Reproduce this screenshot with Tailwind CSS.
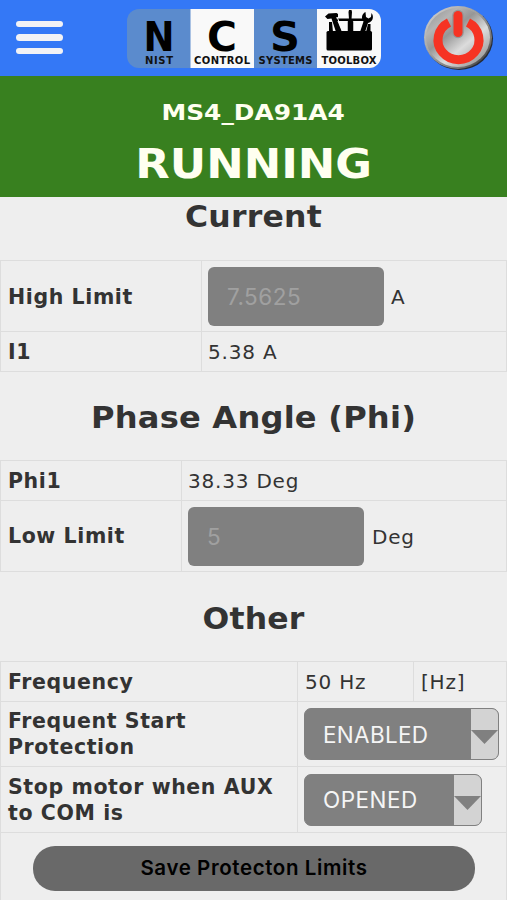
<!DOCTYPE html>
<html lang="en">
<head>
  <meta charset="UTF-8" />
  <meta name="viewport" content="width=device-width, initial-scale=1.0" />
  <title>NIST Control Systems Toolbox</title>
  <script src="https://cdn.jsdelivr.net/npm/@tailwindcss/browser@4"></script>
</head>
<body class="h-[900px] overflow-hidden bg-[#eeeeee] font-['DejaVu_Sans',sans-serif] text-[20px] leading-[26px] text-[#333333]">
  <header class="flex h-[76px] items-start bg-[#3478f6]">
    <!-- Menu button -->
    <button class="mt-[20.5px] ml-[15.5px] flex w-[47.5px] flex-col gap-[7px]" aria-label="Menu">
      <span class="h-[6.5px] rounded-full bg-[#f2f2f5]"></span>
      <span class="h-[6.5px] rounded-full bg-[#f2f2f5]"></span>
      <span class="h-[6.5px] rounded-full bg-[#f2f2f5]"></span>
    </button>

    <!-- Logo -->
    <svg class="mt-[9px] ml-[64px] h-[59px] w-[254px] shrink-0" viewBox="0 0 254 59" font-family="DejaVu Sans, sans-serif" font-weight="bold" text-anchor="middle">
      <clipPath id="logo"><rect width="254" height="59" rx="12" /></clipPath>
      <g clip-path="url(#logo)">
        <rect width="254" height="59" fill="#5b8bcd" />
        <rect x="63.500" width="63.500" height="59" fill="#f9f9f9" />
        <rect x="190" width="64" height="59" fill="#f9f9f9" />
      </g>
      <text x="32" y="42" font-size="40" textLength="31" lengthAdjust="spacingAndGlyphs">N</text>
      <text x="95" y="42" font-size="40" textLength="30" lengthAdjust="spacingAndGlyphs">C</text>
      <text x="158" y="42" font-size="40" textLength="30" lengthAdjust="spacingAndGlyphs">S</text>
      <g font-size="10" fill="#111111">
        <text x="32" y="54.500" textLength="28">NIST</text>
        <text x="95" y="54.500" textLength="56">CONTROL</text>
        <text x="158.500" y="54.500" textLength="54">SYSTEMS</text>
        <text x="222" y="54.500" textLength="55">TOOLBOX</text>
      </g>
      <!-- Toolbox -->
      <rect x="199.500" y="22" width="45.500" height="19.500" rx="1.500" />
      <path d="M202 23V13h3l1 10zM239 23l2-8h2.500v8zM208 9.500h31V12h-31z" />
      <path d="M198 7.500l3.500-3 8-.5 1.500 1v3l-2 .5L215 23h-6L204.500 9.500l-4 .5z" />
      <path d="M222 1h2.500l.5 2-.5 7.500L226.500 13v10h-6V13l1.500-2.500-.5-7.500z" />
      <path d="M233 23l3.500-10.500c-2.500-3-2-7.500 2-9.500l.5 5 2.500 1.500 2.500-1.500.5-4c3 4 1 9-3.500 10L238 23z" />
      <path d="M210.500 9l5 13M220 13v9M227 13v9" stroke="#f9f9f9" stroke-width="1" fill="none" />
    </svg>

    <!-- Power button -->
    <svg class="mt-[5px] ml-[41.5px] h-[66px] w-[72px] shrink-0" viewBox="0 0 72 66">
      <defs>
        <linearGradient id="rim" x1="0" y1="0" x2="1" y2="1">
          <stop offset="0" stop-color="#d8d8d8" />
          <stop offset=".35" stop-color="#aaaaaa" />
          <stop offset=".75" stop-color="#777777" />
          <stop offset="1" stop-color="#111111" />
        </linearGradient>
        <linearGradient id="metal" x1="0" y1="0" x2=".9" y2="1">
          <stop offset="0" stop-color="#909090" />
          <stop offset=".25" stop-color="#b4b4b4" />
          <stop offset=".42" stop-color="#969696" />
          <stop offset=".65" stop-color="#dcdcdc" />
          <stop offset="1" stop-color="#8a8a8a" />
        </linearGradient>
      </defs>
      <ellipse cx="36" cy="33.500" rx="34" ry="31.500" fill="#252a35" />
      <ellipse cx="35" cy="32.500" rx="34" ry="31.500" fill="url(#rim)" />
      <ellipse cx="35" cy="32.500" rx="32" ry="29.500" fill="url(#metal)" />
      <path d="M26 17.500A20.500 19.700 0 1 0 45 17.500" fill="none" stroke="#f63323" stroke-width="9" />
      <path d="M35 10.500v17" stroke="#969696" stroke-width="11.500" stroke-linecap="round" />
      <path d="M35 10.500v17" stroke="#f63323" stroke-width="9" stroke-linecap="round" />
    </svg>
  </header>

  <section class="flex h-[121px] flex-col items-center bg-[#38801f] font-bold text-[#fffff0]">
    <p class="mt-[23px] scale-x-[1.13] text-[22px] leading-[28px]">MS4_DA91A4</p>
    <p class="mt-[12px] scale-x-[1.12] text-[40px] leading-[50px]">RUNNING</p>
  </section>

  <main class="text-[20px]">
    <h2 class="flex h-[63px] scale-x-[1.05] justify-center pt-[2px] text-[30px] leading-[36px] font-bold tracking-[0.2px]">Current</h2>
    <table class="w-[507px] table-fixed border-collapse [&_td]:border [&_td]:border-[#dddddd] [&_td]:p-0 [&_td]:pl-[6px] [&_td]:tracking-[0.8px] [&_th]:border [&_th]:border-[#dddddd] [&_th]:p-0 [&_th]:pl-[7px] [&_th]:text-left [&_th]:text-[20.5px] [&_th]:tracking-[0.6px]">
      <colgroup><col class="w-[201px]" /><col /></colgroup>
      <tr class="h-[71px]">
        <th class="relative top-px">High Limit</th>
        <td>
          <div class="flex items-center gap-[7px]">
            <div class="flex h-[59px] w-[176px] items-center rounded-[6px] bg-[#808080] pt-[2px] pl-[19px] font-['Inter',sans-serif] text-[22.5px] tracking-[0.5px] text-[#a0a0a0]">7.5625</div>
            <span class="pt-[2px]">A</span>
          </div>
        </td>
      </tr>
      <tr class="h-[40px]"><th>I1</th><td>5.38 A</td></tr>
    </table>

    <h2 class="flex h-[88px] scale-x-[1.07] justify-center pt-[28px] text-[30px] leading-[36px] font-bold tracking-[0.2px]">Phase Angle (Phi)</h2>
    <table class="w-[507px] table-fixed border-collapse [&_td]:border [&_td]:border-[#dddddd] [&_td]:p-0 [&_td]:pl-[6px] [&_td]:tracking-[0.8px] [&_th]:border [&_th]:border-[#dddddd] [&_th]:p-0 [&_th]:pl-[7px] [&_th]:text-left [&_th]:text-[20.5px] [&_th]:tracking-[0.6px]">
      <colgroup><col class="w-[181px]" /><col /></colgroup>
      <tr class="h-[40px]"><th>Phi1</th><td>38.33 Deg</td></tr>
      <tr class="h-[71px]">
        <th>Low Limit</th>
        <td>
          <div class="flex items-center gap-[8px]">
            <div class="flex h-[59px] w-[176px] items-center rounded-[6px] bg-[#808080] pt-[2px] pl-[19px] font-['Inter',sans-serif] text-[22.5px] tracking-[0.5px] text-[#a0a0a0]">5</div>
            <span class="pt-[2px]">Deg</span>
          </div>
        </td>
      </tr>
    </table>

    <h2 class="flex h-[89px] scale-x-[1.05] justify-center pt-[29px] text-[30px] leading-[36px] font-bold tracking-[0.2px]">Other</h2>
    <table class="w-[507px] table-fixed border-collapse [&_td]:border [&_td]:border-[#dddddd] [&_td]:p-0 [&_td]:pl-[7px] [&_td]:tracking-[0.8px] [&_th]:border [&_th]:border-[#dddddd] [&_th]:p-0 [&_th]:pl-[7px] [&_th]:text-left [&_th]:text-[20.5px] [&_th]:tracking-[0.6px]">
      <colgroup><col class="w-[297px]" /><col class="w-[116px]" /><col /></colgroup>
      <tr class="h-[40px]"><th>Frequency</th><td>50 Hz</td><td>[Hz]</td></tr>
      <tr class="h-[65px]">
        <th>Frequent Start<br />Protection</th>
        <td colspan="2">
          <div class="-ml-px flex h-[52px] w-[195px] overflow-hidden rounded-[7px] border border-[#808080] bg-[#808080] font-['Inter',sans-serif] text-[22.5px] tracking-[0.3px] text-[#f5f5f5]">
            <span class="flex flex-1 items-center pt-px pl-[18px]">ENABLED</span>
            <span class="w-[27px] bg-[#d3d3d3] pt-[21px]"><svg class="h-[14px] w-[27px]" viewBox="0 0 27 14"><path d="M0 0h27L13.500 14z" fill="#808080" /></svg></span>
          </div>
        </td>
      </tr>
      <tr class="h-[66px]">
        <th>Stop motor when AUX<br />to COM is</th>
        <td colspan="2">
          <div class="-ml-px flex h-[52px] w-[178px] overflow-hidden rounded-[7px] border border-[#808080] bg-[#808080] font-['Inter',sans-serif] text-[22.5px] tracking-[0.5px] text-[#f5f5f5]">
            <span class="flex flex-1 items-center pt-px pl-[18px]">OPENED</span>
            <span class="w-[27px] bg-[#d3d3d3] pt-[21px]"><svg class="h-[14px] w-[27px]" viewBox="0 0 27 14"><path d="M0 0h27L13.500 14z" fill="#808080" /></svg></span>
          </div>
        </td>
      </tr>
      <tr class="h-[71px]">
        <td colspan="3">
          <button class="ml-[25px] flex h-[45px] w-[442px] items-center justify-center rounded-[22px] bg-[#696969] font-['Inter',sans-serif] text-[20.5px] font-semibold tracking-[0.6px] text-black">Save Protecton Limits</button>
        </td>
      </tr>
    </table>
  </main>
</body>
</html>
